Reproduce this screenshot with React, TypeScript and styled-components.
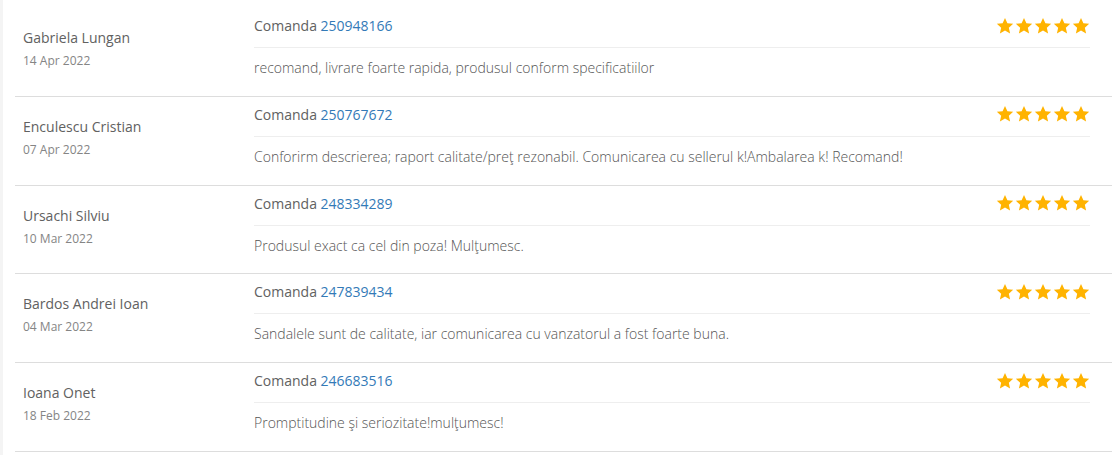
import React from "react";
import styled, { createGlobalStyle } from "styled-components";

const GlobalStyle = createGlobalStyle`
  html, body {
    margin: 0;
    padding: 0;
    background: #f4f4f4;
    font-family: "Open Sans", "Liberation Sans", sans-serif;
    overflow: hidden;
  }
`;

interface ReviewI {
  name: string;
  date: string;
  order: string;
  text: string;
  rating: number;
}

const reviews: ReviewI[] = [
  {
    name: "Gabriela Lungan",
    date: "14 Apr 2022",
    order: "250948166",
    text: "recomand, livrare foarte rapida, produsul conform specificatiilor",
    rating: 5,
  },
  {
    name: "Enculescu Cristian",
    date: "07 Apr 2022",
    order: "250767672",
    text: "Conforirm descrierea; raport calitate/preţ rezonabil. Comunicarea cu sellerul k!Ambalarea k! Recomand!",
    rating: 5,
  },
  {
    name: "Ursachi Silviu",
    date: "10 Mar 2022",
    order: "248334289",
    text: "Produsul exact ca cel din poza! Mulţumesc.",
    rating: 5,
  },
  {
    name: "Bardos Andrei Ioan",
    date: "04 Mar 2022",
    order: "247839434",
    text: "Sandalele sunt de calitate, iar comunicarea cu vanzatorul a fost foarte buna.",
    rating: 5,
  },
  {
    name: "Ioana Onet",
    date: "18 Feb 2022",
    order: "246683516",
    text: "Promptitudine şi seriozitate!mulţumesc!",
    rating: 5,
  },
];

const Star = () => (
  <svg width="18" height="18" viewBox="0 0 24 24">
    <polygon
      fill="#ffb300"
      points="12,1.2 15.2,8.3 22.9,9.1 17.1,14.3 18.8,21.9 12,18 5.2,21.9 6.9,14.3 1.1,9.1 8.8,8.3"
    />
  </svg>
);

export default function App() {
  return (
    <>
      <GlobalStyle />
      <Page>
        {reviews.map((r) => (
          <Row key={r.order}>
            <Author>
              <AuthorName>{r.name}</AuthorName>
              <ReviewDate>{r.date}</ReviewDate>
            </Author>
            <Body>
              <Header>
                <OrderLabel>
                  Comanda <OrderNumber>{r.order}</OrderNumber>
                </OrderLabel>
                <Stars>
                  {Array.from({ length: r.rating }).map((_, i) => (
                    <Star key={i} />
                  ))}
                </Stars>
              </Header>
              <ReviewText>{r.text}</ReviewText>
            </Body>
          </Row>
        ))}
      </Page>
    </>
  );
}

const Page = styled.div`
  margin-left: 3px;
  background: white;
  padding-top: 8px;
  height: 455px;
  box-sizing: border-box;
`;

const Row = styled.div`
  display: flex;
  margin-left: 12px;
  padding-right: 22px;
  height: 88.8px;
  box-sizing: border-box;
  border-bottom: 1px solid #dddddd;
`;

const Author = styled.div`
  width: 231px;
  padding-left: 8px;
  padding-top: 20px;
  flex-shrink: 0;
`;

const AuthorName = styled.div`
  font-size: 14px;
  line-height: 20px;
  color: #616161;
`;

const ReviewDate = styled.div`
  font-size: 12px;
  line-height: 18px;
  margin-top: 4px;
  color: #858585;
`;

const Body = styled.div`
  flex: 1;
  display: flex;
  flex-direction: column;
`;

const Header = styled.div`
  display: flex;
  align-items: center;
  justify-content: space-between;
  padding: 8px 0 11px;
  border-bottom: 1px solid #eeeeee;
`;

const OrderLabel = styled.span`
  font-size: 14px;
  line-height: 20px;
  color: #616161;
`;

const OrderNumber = styled.span`
  color: #337ab7;
`;

const Stars = styled.div`
  display: flex;
  gap: 1px;
  margin-top: -1px;
`;

const ReviewText = styled.div`
  font-size: 14px;
  font-weight: 300;
  line-height: 20px;
  padding-top: 10px;
  color: #555555;
`;
